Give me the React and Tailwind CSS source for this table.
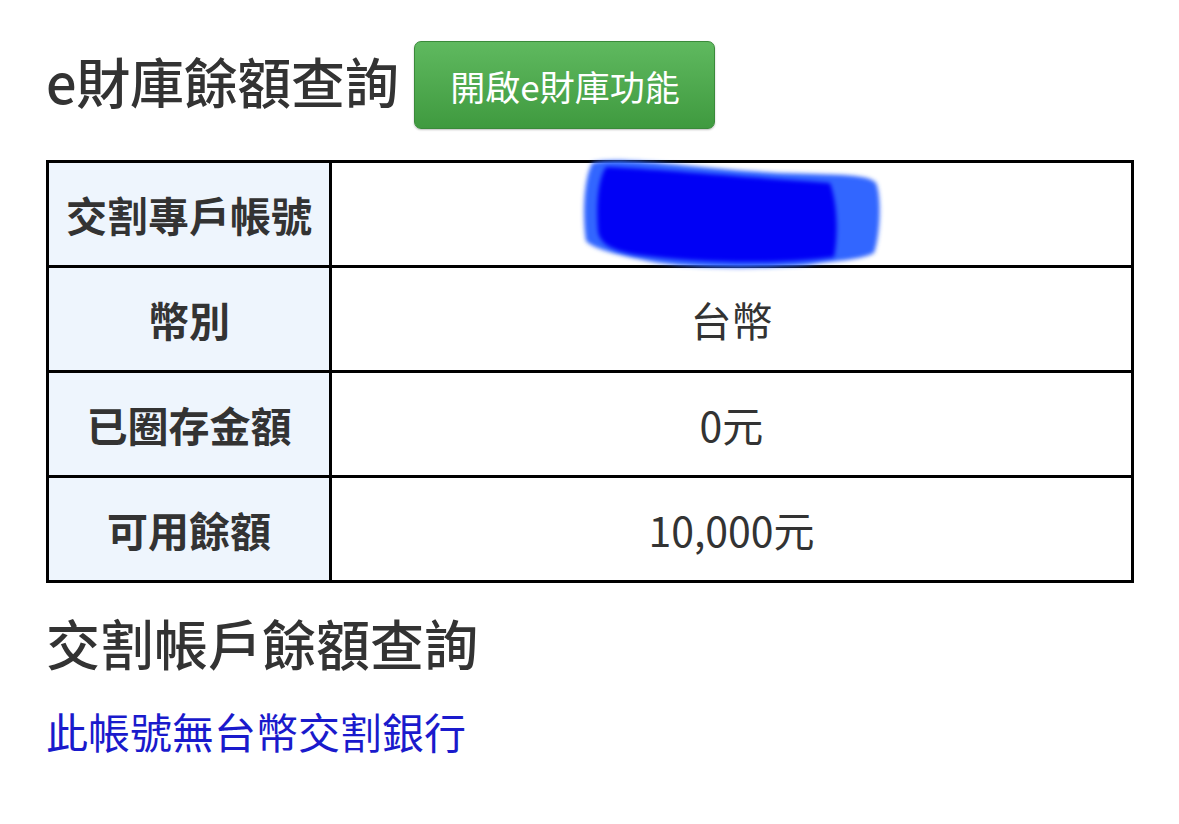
const FONT = "font-['Noto_Sans_CJK_TC','Noto_Sans',sans-serif]"

const rows = [
  { label: '交割專戶帳號', value: '', masked: true },
  { label: '幣別', value: '台幣' },
  { label: '已圈存金額', value: '0元' },
  { label: '可用餘額', value: '10,000元' },
]

function Scribble() {
  return (
    <svg
      className="absolute left-[246px] top-[-8px] pointer-events-none"
      width="310"
      height="120"
      viewBox="0 0 310 120"
    >
      <defs>
        <filter id="soft" x="-10%" y="-10%" width="120%" height="120%">
          <feGaussianBlur stdDeviation="2.2" />
        </filter>
      </defs>
      <path
        d="M14 8 C40 0 120 14 200 18 C250 20 290 18 298 28 C304 42 302 82 296 98 C280 106 250 106 230 110 C180 114 110 114 70 106 C40 100 16 94 8 86 C4 60 6 24 14 8 Z"
        fill="#3366ff"
        filter="url(#soft)"
      />
      <path
        d="M28 12 C80 14 160 22 252 28 C260 50 260 82 256 102 C200 110 120 108 60 100 C36 96 22 90 20 76 C18 50 20 24 28 12 Z"
        fill="#0000f5"
        filter="url(#soft)"
      />
    </svg>
  )
}

export default function App() {
  return (
    <div className={`${FONT} bg-white min-h-[824px] px-[46px] pt-[41px] text-[#333]`}>
      <div className="flex items-center gap-[16px] h-[88px]">
        <h1 className="text-[54px] leading-none font-medium tracking-[-0.3px] -mt-[8px]">e財庫餘額查詢</h1>
        <button className="w-[301px] h-[88px] rounded-[7px] border border-[#3a8a3a] bg-gradient-to-b from-[#5fb95f] to-[#3f9a3f] text-white text-[35px] leading-none shadow-[0_1px_2px_rgba(0,0,0,0.25)]">
          開啟e財庫功能
        </button>
      </div>

      <table className="mt-[31px] w-[1088px] border-collapse border-[3px] border-black">
        <tbody>
          {rows.map((r, i) => (
            <tr key={i} className="h-[105px]">
              <td className="w-[283px] border-[3px] border-black bg-[#eef5fd] text-center text-[41px] font-bold text-[#333] leading-none">
                {r.label}
              </td>
              <td className="relative border-[3px] border-black text-center text-[41px] text-[#333] leading-none">
                {r.masked ? <Scribble /> : r.value}
              </td>
            </tr>
          ))}
        </tbody>
      </table>

      <h2 className="mt-[28px] text-[54px] leading-[1.2] font-medium text-[#333]">交割帳戶餘額查詢</h2>
      <p className="mt-[30px] text-[42px] leading-[1.2] text-[#1a1acc]">此帳號無台幣交割銀行</p>
    </div>
  )
}
